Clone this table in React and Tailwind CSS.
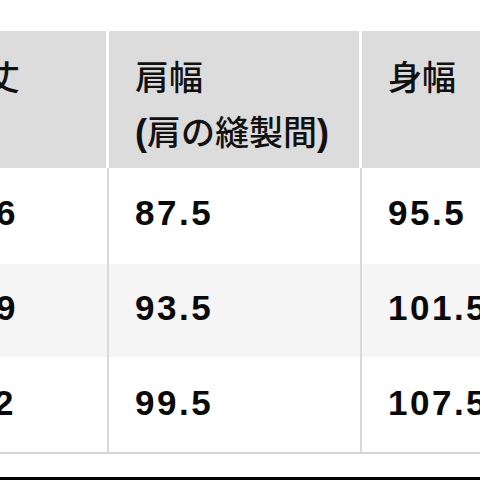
export default function App() {
  const cjk = { fontFamily: '"Noto Sans CJK JP", "Noto Sans CJK SC", sans-serif' };
  const num = { fontFamily: '"Liberation Sans", Arial, sans-serif' };
  const rows = [
    { a: "106", b: "87.5", c: "95.5", bg: "bg-white", h: "h-[96px]", pt: "pt-[27px]" },
    { a: "109", b: "93.5", c: "101.5", bg: "bg-[#f5f5f5]", h: "h-[93px]", pt: "pt-[26px]" },
    { a: "112", b: "99.5", c: "107.5", bg: "bg-white", h: "h-[95px]", pt: "pt-[28px]" },
  ];
  const numCls = "text-[35px] font-bold leading-none tracking-[2.5px] text-[#0a0a0a] whitespace-nowrap";
  return (
    <div className="w-[480px] h-[480px] overflow-hidden bg-white">
      <div className="pt-[31px] -ml-[70px] w-[700px]">
        {/* header */}
        <div className="flex gap-[3px] bg-white h-[137px]">
          <div className="w-[176px] shrink-0 bg-[#dcdcdc] pl-[22px] pt-[17px]">
            <div className="text-[34px] font-medium leading-[55px] text-[#111111]" style={cjk}>着丈</div>
          </div>
          <div className="w-[250px] shrink-0 bg-[#dcdcdc] pl-[26px] pt-[17px]">
            <div className="text-[34px] font-medium leading-[55px] text-[#111111] whitespace-nowrap" style={cjk}>肩幅</div>
            <div className="text-[34px] font-medium leading-[55px] text-[#111111] whitespace-nowrap" style={cjk}>
              <span className="font-bold text-[36px]" style={num}>(</span>
              肩の縫製間
              <span className="font-bold text-[36px]" style={num}>)</span>
            </div>
          </div>
          <div className="flex-1 bg-[#dcdcdc] pl-[26px] pt-[17px]">
            <div className="text-[34px] font-medium leading-[55px] text-[#111111]" style={cjk}>身幅</div>
          </div>
        </div>
        {/* body */}
        {rows.map((r, i) => (
          <div key={i} className={`flex ${r.bg} ${r.h}`}>
            <div className={`w-[179px] shrink-0 border-r-2 border-[#d9d9d9] pl-[22px] ${r.pt}`}>
              <div className={numCls} style={num}>{r.a}</div>
            </div>
            <div className={`w-[253px] shrink-0 border-r-2 border-[#d9d9d9] pl-[26px] ${r.pt}`}>
              <div className={numCls} style={num}>{r.b}</div>
            </div>
            <div className={`flex-1 pl-[26px] ${r.pt}`}>
              <div className={numCls} style={num}>{r.c}</div>
            </div>
          </div>
        ))}
        <div className="h-[2px] bg-[#d6d6d6]"></div>
        <div className="h-[23px] bg-white"></div>
        <div className="h-[3px] bg-black"></div>
      </div>
    </div>
  );
}
